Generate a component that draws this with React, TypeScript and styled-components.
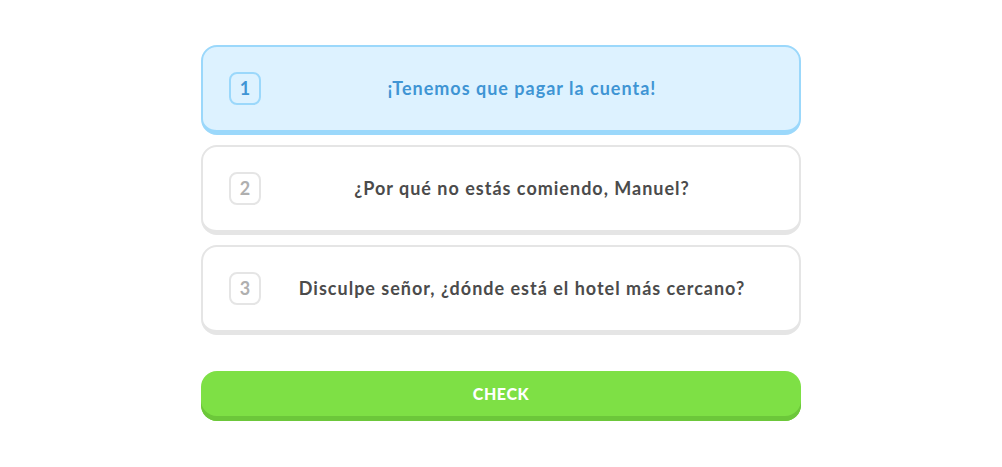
import React from "react";
import styled, { createGlobalStyle } from "styled-components";

const Global = createGlobalStyle`
  html, body { margin: 0; padding: 0; background: #ffffff; }
  body { font-family: "Lato", "Open Sans", sans-serif; }
`;

const Page = styled.div`
  width: 600px;
  margin: 0 auto;
  padding-top: 45px;
  display: flex;
  flex-direction: column;
`;

const List = styled.div`
  display: flex;
  flex-direction: column;
  gap: 10px;
`;

const Card = styled.div<{ $selected?: boolean }>`
  box-sizing: border-box;
  height: 90px;
  display: flex;
  align-items: center;
  padding: 0 28px 1px 26px;
  border: 2px solid ${(p) => (p.$selected ? "#9bd8fb" : "#e5e5e5")};
  border-bottom-width: 5px;
  border-radius: 16px;
  background: ${(p) => (p.$selected ? "#ddf2ff" : "#ffffff")};
  gap: 12px;
`;

const Num = styled.div<{ $selected?: boolean }>`
  box-sizing: border-box;
  width: 32px;
  height: 33px;
  border: 2px solid ${(p) => (p.$selected ? "#9bd8fb" : "#e5e5e5")};
  border-radius: 8px;
  display: flex;
  align-items: center;
  justify-content: center;
  font-size: 18px;
  font-weight: 700;
  color: ${(p) => (p.$selected ? "#3f95d4" : "#afafaf")};
  flex: none;
`;

const Text = styled.div<{ $selected?: boolean }>`
  flex: 1;
  text-align: center;
  font-size: 18px;
  font-weight: 700;
  letter-spacing: 1px;
  color: ${(p) => (p.$selected ? "#3f95d4" : "#4b4b4b")};
`;

const CheckButton = styled.button`
  box-sizing: border-box;
  margin-top: 36px;
  height: 50px;
  width: 100%;
  border: none;
  border-radius: 16px;
  background: #7ee045;
  box-shadow: inset 0 -5px 0 #6cc73a;
  padding: 0 0 5px;
  color: #ffffff;
  font-family: "Lato", sans-serif;
  font-size: 16px;
  font-weight: 900;
  letter-spacing: 0.6px;
  cursor: pointer;
`;

const items = [
  "¡Tenemos que pagar la cuenta!",
  "¿Por qué no estás comiendo, Manuel?",
  "Disculpe señor, ¿dónde está el hotel más cercano?",
];

export default function App() {
  return (
    <>
      <Global />
      <Page>
        <List>
          {items.map((t, i) => (
            <Card key={i} $selected={i === 0}>
              <Num $selected={i === 0}>{i + 1}</Num>
              <Text $selected={i === 0}>{t}</Text>
            </Card>
          ))}
        </List>
        <CheckButton>CHECK</CheckButton>
      </Page>
    </>
  );
}
